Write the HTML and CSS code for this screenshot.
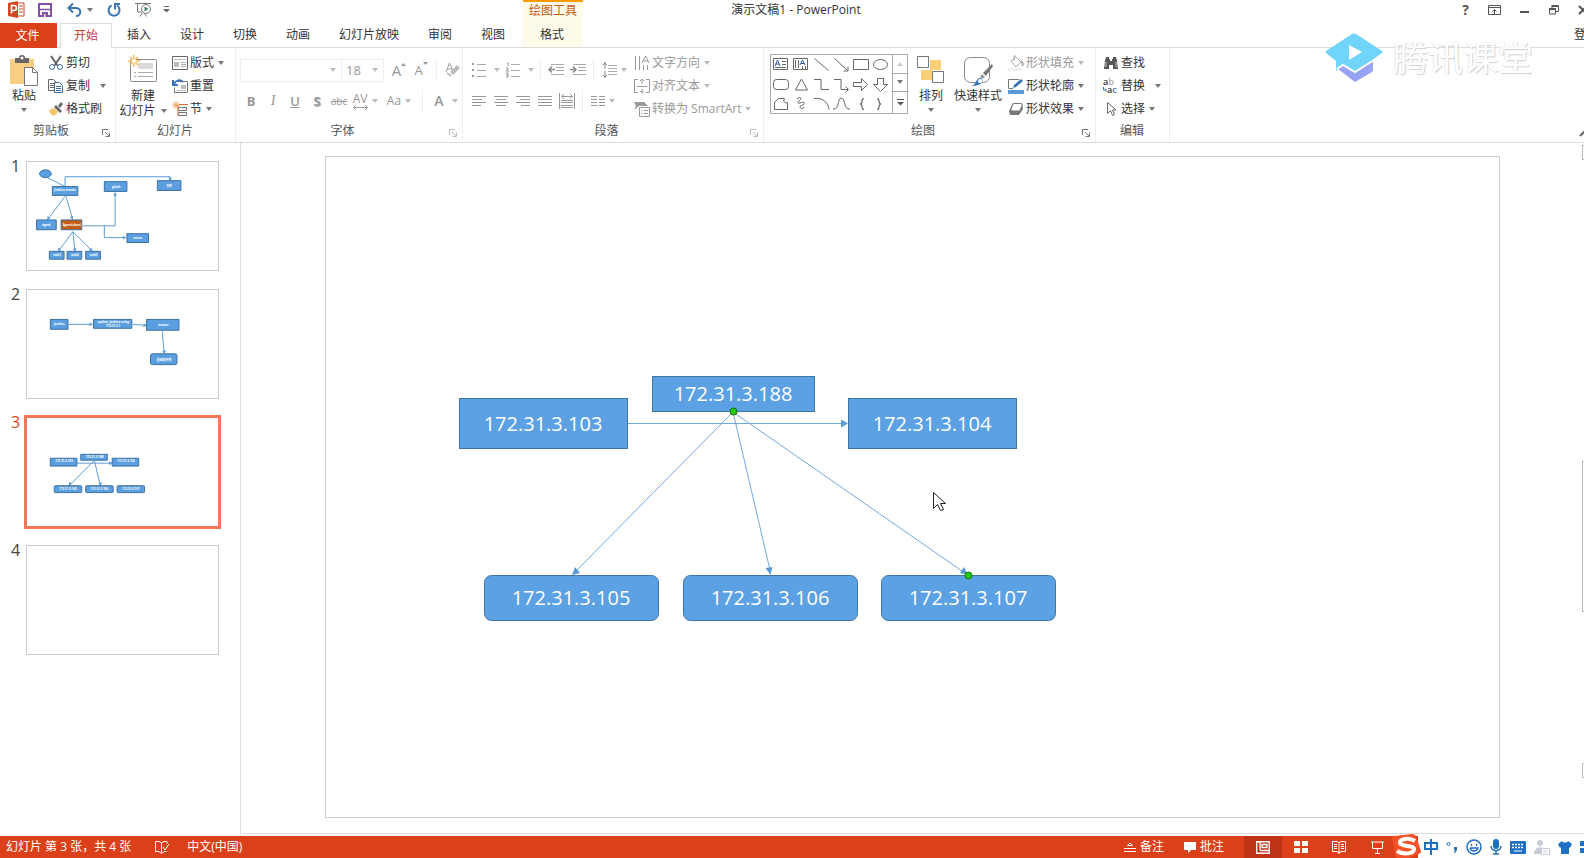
FILE: index.html
```html
<!DOCTYPE html>
<html lang="zh-CN">
<head>
<meta charset="utf-8">
<title>演示文稿1 - PowerPoint</title>
<link rel="stylesheet" href="styles.css">
</head>
<body>
<div class="app">
<header class="titlebar">
  <div class="quick">
    <svg class="q-logo" width="17" height="17" viewBox="0 0 17 17"><path d="M8 2h8v13H8z" fill="#fff" stroke="#d24726"/><path d="M11 5h4M11 8h4M11 11h4" stroke="#d24726"/><path d="M0 2l10-2v17L0 15z" fill="#d24726"/><path d="M3.500 12.500v-8h2.500a2 2 0 0 1 0 5H3.500" fill="none" stroke="#fff" stroke-width="1.600"/></svg>
    <button class="qb q-save" aria-label="保存"><svg width="14" height="14" viewBox="0 0 14 14"><path d="M1 1h12v12H1z" fill="#fff" stroke="#8450a8" stroke-width="2"/><path d="M2 6.500h10" stroke="#8450a8" stroke-width="1.500"/><path d="M4 9h6v5H4z" fill="#8450a8"/><path d="M6 11h1.500v3H6z" fill="#fff"/></svg></button>
    <button class="qb q-undo" aria-label="撤消"><svg width="15" height="14" viewBox="0 0 15 14"><path d="M1.500 5H9c6 0 5.500 8 0 8M6 .500L1.500 5 6 9.500" fill="none" stroke="#3b74b5" stroke-width="2"/></svg><i class="caret"></i></button>
    <button class="qb q-redo" aria-label="重复"><svg width="14" height="14" viewBox="0 0 14 14"><path d="M10 2.500A5.500 5.500 0 1 1 4.500 2.300M8 6.500V1h5" fill="none" stroke="#3b74b5" stroke-width="2"/></svg></button>
    <button class="qb q-show" aria-label="从头开始"><svg width="17" height="15" viewBox="0 0 17 15"><path d="M0 1.500h16M2.500 2v8H7M7.500 11L5 14.500M9 11l2.500 3.500" fill="none" stroke="#777"/><circle cx="11" cy="7" r="4.500" fill="#fff" stroke="#777"/><path d="M9.500 4.500v5l4-2.500z" fill="#44815f"/></svg></button>
    <button class="qb q-more" aria-label="自定义快速访问工具栏"><svg width="7" height="7" viewBox="0 0 7 7"><path d="M1 .500h5" stroke="#666"/><path d="M0 3h7L3.500 6.500z" fill="#666"/></svg></button>
  </div>
  <div class="context">绘图工具</div>
  <h1 class="doc-title">演示文稿1 - PowerPoint</h1>
  <div class="window-buttons">
    <button aria-label="帮助" class="help">?</button>
    <button aria-label="功能区显示选项"><svg width="13" height="10" viewBox="0 0 13 10"><path d="M.500.500h12v9H.500zM.500 2.500h12M6.500 9V4.500M4.500 6.500l2-2 2 2" fill="none" stroke="#555"/></svg></button>
    <button aria-label="最小化"><svg width="10" height="10" viewBox="0 0 10 10"><path d="M0 7h9" stroke="#555" stroke-width="2"/></svg></button>
    <button aria-label="还原"><svg width="10" height="10" viewBox="0 0 10 10"><path d="M.500 4h6v5h-6zM3 3.500V1h6.500v5.500H7" fill="none" stroke="#555"/><path d="M0 4h7M2.500 1h7" stroke="#555" stroke-width="2"/></svg></button>
    <button aria-label="关闭"><svg width="10" height="10" viewBox="0 0 10 10"><path d="M1 1l8 8M9 1L1 9" stroke="#555" stroke-width="2"/></svg></button>
  </div>
</header>

<nav class="tabs">
  <button class="tab file">文件</button>
  <button class="tab active">开始</button>
  <button class="tab">插入</button>
  <button class="tab">设计</button>
  <button class="tab">切换</button>
  <button class="tab">动画</button>
  <button class="tab">幻灯片放映</button>
  <button class="tab">审阅</button>
  <button class="tab">视图</button>
  <button class="tab format">格式</button>
  <button class="signin">登录</button>
</nav>

<section class="ribbon">
  <div class="group g-clip">
    <div class="body">
      <button class="big"><svg width="30" height="32" viewBox="0 0 30 32"><path d="M1 4h24v25H1z" fill="#f8cf80"/><path d="M6 3h4a3 3 0 0 1 6 0h4v5H6z" fill="#666"/><circle cx="13" cy="3" r="1.500" fill="#fff"/><path d="M15.500 12.500h8l5 5v13h-13z" fill="#fff" stroke="#777"/><path d="M23.500 12.500v5h5" fill="none" stroke="#777"/></svg><span>粘贴</span><i class="caret"></i></button>
      <div class="rows">
        <button class="sm"><svg width="16" height="16" viewBox="0 0 16 16"><path d="M3 1l7 10M13 1L6 11" stroke="#666" stroke-width="2"/><circle cx="4" cy="12" r="2.500" fill="#fff" stroke="#3b74b5"/><circle cx="12" cy="12" r="2.500" fill="#fff" stroke="#3b74b5"/></svg>剪切</button>
        <button class="sm"><svg width="16" height="16" viewBox="0 0 16 16"><path d="M.500 1.500h5l3 3v8h-8zM2 5.500h4M2 7.500h4M2 9.500h4" fill="#fff" stroke="#666"/><path d="M6.500 4.500h5l3 3v7h-8z" fill="#fff" stroke="#3b6a9b"/><path d="M8 8.500h5M8 10.500h5M8 12.500h5" stroke="#3b6a9b"/></svg>复制<i class="caret far"></i></button>
        <button class="sm"><svg width="16" height="16" viewBox="0 0 16 16"><path d="M1 9l5-2 4 4-4 4c-2-1-4-2-5-6z" fill="#f5c565"/><path d="M6 6l2-2 6 6-2 2zM10 5l3-4 2 2-3 4z" fill="#666"/></svg>格式刷</button>
      </div>
    </div>
    <div class="foot"><span>剪贴板</span><button class="launch" aria-label="剪贴板选项"><svg width="8" height="8" viewBox="0 0 8 8"><path d="M.500 6V.500H6M3 3l4 4M7.500 3.500v4h-4" fill="none" stroke="currentColor"/></svg></button></div>
  </div>

  <div class="group g-slides">
    <div class="body">
      <button class="big"><svg width="30" height="32" viewBox="0 0 30 32"><rect x="2.500" y="4.500" width="26" height="22" rx="1" fill="#fff" stroke="#888"/><path d="M10 8h15v6H10z" fill="#d9d9d9"/><path d="M6 17.500h2M10 17.500h15M6 21.500h2M10 21.500h15" stroke="#aaa"/><path d="M6 0v12M0 6h12M2 2l8 8M10 2l-8 8" stroke="#f4bd60" stroke-width="1.500"/><circle cx="6" cy="6" r="2" fill="#fff"/></svg><span>新建</span><span class="inline">幻灯片<i class="caret"></i></span></button>
      <div class="rows">
        <button class="sm"><svg width="16" height="16" viewBox="0 0 16 16"><path d="M.500 1.500h15v13H.500z" fill="#fff" stroke="#666"/><path d="M2 4h12v1H2zM2 7h5v5H2z" fill="#bbb"/><path d="M9 7.500h5M9 9.500h5M9 11.500h5" stroke="#aaa"/></svg>版式<i class="caret"></i></button>
        <button class="sm"><svg width="16" height="16" viewBox="0 0 16 16"><path d="M5.500 3.500h10v11h-13v-5" fill="#fff" stroke="#777"/><path d="M9 7h5v4H9zM5 12h9v1H5z" fill="#bbb"/><path d="M1 2v5h5M2 6c2-4 6-5 9-2" fill="none" stroke="#3b74b5" stroke-width="2"/></svg>重置</button>
        <button class="sm"><svg width="16" height="16" viewBox="0 0 16 16"><path d="M4 0v8M0 4h8M1 1l6 6M7 1L1 7" stroke="#f1a35b"/><path d="M7 3.500h9" stroke="#d86a3a"/><path d="M6.500 6.500h8v3h-8zM6.500 11.500h8v3h-8z" fill="#fff" stroke="#777"/><path d="M6 4v11" stroke="#d86a3a"/></svg>节<i class="caret"></i></button>
      </div>
    </div>
    <div class="foot"><span>幻灯片</span></div>
  </div>

  <div class="group g-font dim">
    <div class="body stack">
      <div class="line">
        <label class="combo name"><select aria-label="字体"><option></option></select><i class="caret"></i></label>
        <label class="combo size"><select aria-label="字号"><option>18</option></select><i class="caret"></i></label>
        <button class="ic w22" aria-label="增大字号"><span class="grow">A</span><svg width="5" height="10" viewBox="0 0 5 10"><path d="M0 3h5L2.500 0z" fill="#999"/></svg></button>
        <button class="ic w22" aria-label="减小字号"><span class="shrink">A</span><svg width="5" height="12" viewBox="0 0 5 12"><path d="M0 0h5L2.500 3z" fill="#999"/></svg></button>
        <b class="sep"></b>
        <button class="ic w22" aria-label="清除格式"><svg width="15" height="16" viewBox="0 0 15 16"><path d="M1 10L4.500 1 8 9M2 7h5" fill="none" stroke="#999"/><path d="M5 10l7-7 3 3-7 7z" fill="#bbb"/><path d="M2 11l4 3" stroke="#bbb" stroke-width="2"/></svg></button>
      </div>
      <div class="line">
        <button class="ic w22 bold">B</button>
        <button class="ic w22 ital">I</button>
        <button class="ic w22 under">U</button>
        <button class="ic w22 shadow">S</button>
        <button class="ic w22 strike">abc</button>
        <button class="ic w30" aria-label="字符间距"><span class="av">AV<svg width="15" height="5" viewBox="0 0 15 5"><path d="M1 2.500h13M3 0L.500 2.500 3 5M12 0l2.500 2.500L12 5" fill="none" stroke="#999"/></svg></span><i class="caret"></i></button>
        <button class="ic w38">Aa<i class="caret"></i></button>
        <b class="sep"></b>
        <button class="ic w38 color">A<i class="caret far"></i></button>
      </div>
    </div>
    <div class="foot"><span>字体</span><button class="launch" aria-label="字体选项"><svg width="8" height="8" viewBox="0 0 8 8"><path d="M.500 6V.500H6M3 3l4 4M7.500 3.500v4h-4" fill="none" stroke="currentColor"/></svg></button></div>
  </div>

  <div class="group g-para dim">
    <div class="body">
      <div class="stack para-icons">
        <div class="line">
          <button class="ic w34" aria-label="项目符号"><svg width="14" height="16" viewBox="0 0 14 16"><path d="M0 1h2v2H0zM0 7h2v2H0zM0 13h2v2H0z" fill="#999"/><path d="M5 2.500h9M5 8.500h9M5 14.500h9" stroke="#aaa"/></svg><i class="caret far"></i></button>
          <button class="ic w34" aria-label="编号"><svg width="14" height="16" viewBox="0 0 14 16"><path d="M1 1h1v3M0 6h2v1.500L0 9h3M0 11h2v4H0M0 13h2" fill="none" stroke="#999"/><path d="M5 2.500h9M5 8.500h9M5 14.500h9" stroke="#aaa"/></svg><i class="caret far"></i></button>
          <b class="sep"></b>
          <button class="ic w22" aria-label="降低列表级别"><svg width="16" height="12" viewBox="0 0 16 12"><path d="M3 .500h13M8 3.500h8M8 6.500h8M3 10.500h13" stroke="#aaa"/><path d="M1 5.500h6M4 2.500l-3 3 3 3" fill="none" stroke="#888" stroke-width="1.500"/></svg></button>
          <button class="ic w22" aria-label="提高列表级别"><svg width="16" height="12" viewBox="0 0 16 12"><path d="M3 .500h13M8 3.500h8M8 6.500h8M3 10.500h13" stroke="#aaa"/><path d="M0 5.500h6M3 2.500l3 3-3 3" fill="none" stroke="#888" stroke-width="1.500"/></svg></button>
          <b class="sep"></b>
          <button class="ic w34" aria-label="行距"><svg width="15" height="16" viewBox="0 0 15 16"><path d="M3 0v7M1 3l2-2 2 2M3 9v7M1 13l2 2 2-2" fill="none" stroke="#888"/><path d="M6 3.500h9M6 6.500h9M6 9.500h9M6 12.500h9" stroke="#aaa"/></svg><i class="caret"></i></button>
        </div>
        <div class="line">
          <button class="ic w22" aria-label="左对齐"><svg width="14" height="11" viewBox="0 0 14 11"><path d="M0 .500h14M0 3.500h10M0 6.500h14M0 9.500h9" stroke="#999"/></svg></button>
          <button class="ic w22" aria-label="居中"><svg width="14" height="11" viewBox="0 0 14 11"><path d="M0 .500h14M2 3.500h10M0 6.500h14M2 9.500h10" stroke="#999"/></svg></button>
          <button class="ic w22" aria-label="右对齐"><svg width="14" height="11" viewBox="0 0 14 11"><path d="M0 .500h14M4 3.500h10M0 6.500h14M5 9.500h9" stroke="#999"/></svg></button>
          <button class="ic w22" aria-label="两端对齐"><svg width="14" height="11" viewBox="0 0 14 11"><path d="M0 .500h14M0 3.500h14M0 6.500h14M0 9.500h14" stroke="#999"/></svg></button>
          <button class="ic w22" aria-label="分散对齐"><svg width="16" height="16" viewBox="0 0 16 16"><path d="M.500 0v16M15.500 0v16M3 3.500h10M5 1L2.500 3.500 5 6M11 1l2.500 2.500L11 6M2 7.500h12M2 9.500h12M2 12.500h12M2 14.500h12" fill="none" stroke="#999"/></svg></button>
          <b class="sep"></b>
          <button class="ic w34" aria-label="分栏"><svg width="14" height="11" viewBox="0 0 14 11"><path d="M0 .500h6M0 3.500h6M0 6.500h6M0 9.500h6M8 .500h6M8 3.500h6M8 6.500h6M8 9.500h6" stroke="#999"/></svg><i class="caret"></i></button>
        </div>
      </div>
      <div class="rows">
        <button class="sm"><svg width="16" height="16" viewBox="0 0 16 16"><path d="M1.500 1v14M5.500 1v14M9.500 10v5M13.500 10v5M8 8l3.500-7L15 8M9 6h5" fill="none" stroke="#999"/></svg>文字方向<i class="caret"></i></button>
        <button class="sm"><svg width="16" height="16" viewBox="0 0 16 16"><path d="M4 1.500H.500v13H4M12 1.500h3.500v13H12M3 8.500h10M8 1v5M6 3l2-2 2 2M8 11v4M6 13l2 2 2-2" fill="none" stroke="#999"/></svg>对齐文本<i class="caret"></i></button>
        <button class="sm"><svg width="16" height="16" viewBox="0 0 16 16"><path d="M0 1h10l4 4H5L0 9l2-4z" fill="#999"/><path d="M5.500 6.500h10v9h-10z" fill="#fff" stroke="#999"/><path d="M7 9.500h1M10 9.500h4M7 12.500h1M10 12.500h4" stroke="#999"/></svg>转换为 SmartArt<i class="caret"></i></button>
      </div>
    </div>
    <div class="foot"><span>段落</span><button class="launch" aria-label="段落选项"><svg width="8" height="8" viewBox="0 0 8 8"><path d="M.500 6V.500H6M3 3l4 4M7.500 3.500v4h-4" fill="none" stroke="currentColor"/></svg></button></div>
  </div>

  <div class="group g-draw">
    <div class="body">
      <div class="gallery">
        <svg width="121" height="58" viewBox="0 0 121 58" fill="none" stroke="#666">
          <path d="M2.500 3.500h14v11h-14zM11 6.500h4M11 9.500h4M4 12.500h11"/><path d="M4 11l2.500-6L9 11M5 9h3" stroke="#35589c"/>
          <path d="M22.500 3.500h14v11h-14zM24.500 5v8M27.500 5v8M31.500 11v3M34.500 11v3"/><path d="M29 10l2.500-5 2.500 5M30 8.500h3" stroke="#35589c"/>
          <path d="M43.500 3.500l14 12M63.500 3.500l13 12M77 11.500v4.500h-4.500"/>
          <path d="M82.500 4.500h15v10h-15z"/><ellipse cx="109.500" cy="9.500" rx="7" ry="5"/>
          <rect x="2.500" y="24.500" width="15" height="10" rx="3"/><path d="M30.500 24l6 11h-12z"/>
          <path d="M43 24.500h7v10h8M63 24.500h7v10h7M74.500 31.500l3 3-3 3M82.500 27.500h8v-4l6 6-6 6v-4h-8zM106.500 23.500h6v6h4l-7 7-7-7h4z"/>
          <path d="M3.500 54.500v-7l4-4h6c-2 4 1 5 3 4v7zM26 44c3-3 5-1 3 1s-3 4 0 3 5-1 4 1-4 1-4 3 4 2 4 0M43 43.500c8-1 14 3 15 11M62 54c7 1 4-11 8-11 5 0 2 12 9 11"/>
          <path d="M93 43.500c-4 0 0 5-4 5.500 4 .500 0 5.500 4 5.500M106 43.500c4 0 0 5 4 5.500-4 .500 0 5.500-4 5.500" stroke-width="1.200"/>
        </svg>
        <div class="scroll">
          <button aria-label="上一行"><i class="caret up"></i></button>
          <button aria-label="下一行"><i class="caret"></i></button>
          <button aria-label="更多形状"><svg width="7" height="7" viewBox="0 0 7 7"><path d="M0 .500h7" stroke="#555"/><path d="M0 3h7L3.500 6.500z" fill="#555"/></svg></button>
        </div>
      </div>
      <button class="big arrange"><svg width="28" height="32" viewBox="0 0 28 32"><path d="M13 5h11v10H13zM4 15h11v10H4z" fill="#fbcf78"/><path d="M.500 1.500h11v11h-11zM15.500 16.500h11v11h-11z" fill="#fff" stroke="#777"/></svg><span>排列</span><i class="caret"></i></button>
      <button class="big"><svg width="30" height="32" viewBox="0 0 30 32"><rect x="1.500" y="2.500" width="25" height="25" rx="6" fill="#fff" stroke="#888"/><path d="M29 9l-9 9 3 3 7-10z" fill="#777"/><path d="M19 19l3 3-3 2-2-2z" fill="#999"/><path d="M8 31c6-1 4-7 9-8 4 1 4 8-9 8z" fill="#3b74b5"/><circle cx="17" cy="26" r="2" fill="#fff"/></svg><span>快速样式</span><i class="caret"></i></button>
      <div class="rows">
        <button class="sm off"><svg width="16" height="16" viewBox="0 0 16 16"><path d="M3 6l5-4 5 5-5 5zM6 6V1h2" fill="none" stroke="#aaa"/><path d="M13 6c2 2 2 4 1 5" fill="none" stroke="#aaa" stroke-width="2"/><path d="M0 13h14v3H0z" fill="#f3eeee"/></svg>形状填充<i class="caret"></i></button>
        <button class="sm"><svg width="16" height="16" viewBox="0 0 16 16"><path d="M11 1.500H.500v9H5" fill="none" stroke="#777"/><path d="M5 10l1-3 7-6 2 2-7 6z" fill="#3b74b5"/><path d="M0 12h16v4H0z" fill="#5a9bd5"/></svg>形状轮廓<i class="caret"></i></button>
        <button class="sm"><svg width="16" height="16" viewBox="0 0 16 16"><path d="M5 2h9l1 6-4 6H2l-1-4z" fill="#777"/><path d="M6.500 2.500h6c1 0 2 1 1.500 2l-1.500 4c-.500 1-1 1.500-2 1.500h-6c-1 0-2-1-1.500-2l1.500-4c.500-1 1-1.500 2-1.500z" fill="#fff" stroke="#777"/></svg>形状效果<i class="caret"></i></button>
      </div>
    </div>
    <div class="foot"><span>绘图</span><button class="launch" aria-label="绘图选项"><svg width="8" height="8" viewBox="0 0 8 8"><path d="M.500 6V.500H6M3 3l4 4M7.500 3.500v4h-4" fill="none" stroke="currentColor"/></svg></button></div>
  </div>

  <div class="group g-edit">
    <div class="body">
      <div class="rows">
        <button class="sm"><svg width="16" height="16" viewBox="0 0 16 16"><path d="M3 2h3v2h1v2h2V4h1V2h3l1 4 1 8h-5v-4H6v4H1l1-8z" fill="#555"/><path d="M3 7v5M13 7v5" stroke="#ccc"/></svg>查找</button>
        <button class="sm"><span class="rep"><b>a<em>b</em></b><b class="to"><svg width="4" height="5" viewBox="0 0 4 5"><path d="M.500 0v3H3M2 1.500L3.500 3 2 4.500" fill="none" stroke="#3b74b5"/></svg>a<s>c</s></b></span>替换<i class="caret far"></i></button>
        <button class="sm"><svg width="16" height="16" viewBox="0 0 16 16"><path d="M4.500 1.500v11l3-3 2 5 2-1-2-4.500h3.500z" fill="#fff" stroke="#666"/></svg>选择<i class="caret"></i></button>
      </div>
    </div>
    <div class="foot"><span>编辑</span></div>
  </div>
  <button class="collapse" aria-label="折叠功能区"><svg width="10" height="8" viewBox="0 0 10 8"><path d="M1 6l4-4 4 4" fill="none" stroke="#666" stroke-width="2"/></svg></button>
</section>

<main class="work">
  <ol class="thumbs">
    <li class="thumb"><span>1</span>
      <svg viewBox="0 0 193 110">
        <g class="wire"><path d="M20 16l18 9M38 25v-10h107v4M38 35L20 59M39 35l7 24M56 65h33V31M78 65v12h22M46 71L31 91M46 71l2 20M46 71l20 20"/></g>
        <path class="tip" d="M143 16h4l-2 3zM87 34h4l-2-3zM97 75v4l3-2zM20 59v-4l3 2zM46 59l-3-3 3-1zM31 91v-4l3 2zM48 91l-2-3h4zM66 91l-4-1 3-3z"/>
        <ellipse class="box" cx="18" cy="12" rx="6" ry="4"/>
        <g class="box"><path d="M25 25h26v9H25zM78 20h23v10H78zM132 19h24v10h-24zM9 59h20v10H9zM101 73h22v9h-22zM22 91h15v8H22zM40 91h15v8H40zM59 91h15v8H59z"/></g>
        <path class="box hot" d="M34 59h21v10H34z"/>
        <g class="tiny"><text x="38" y="30">Jenkins master</text><text x="90" y="26">gitlab</text><text x="144" y="25">仓库</text><text x="19" y="65">agent</text><text x="45" y="65">Agent(slave)</text><text x="112" y="78">nexus</text><text x="30" y="96">web1</text><text x="48" y="96">web2</text><text x="67" y="96">web3</text></g>
      </svg></li>
    <li class="thumb"><span>2</span>
      <svg viewBox="0 0 193 110">
        <g class="wire"><path d="M42 35h24M107 35l14 1M137 42l2 23"/></g>
        <path class="tip" d="M63 33v4l3-2zM118 34v4l3-2zM137 62h4l-2 3z"/>
        <g class="box"><path d="M23 30h18v10H23zM67 30h39v9H67zM121 30h33v11h-33z"/><rect x="125" y="65" width="27" height="11" rx="2"/></g>
        <g class="tiny"><text x="32" y="36">jenkins</text><text x="87" y="34">update, Jenkins using</text><text x="87" y="38">172.31.3.1</text><text x="138" y="37">master</text><text x="139" y="72">基础软件库</text></g>
      </svg></li>
    <li class="thumb selected"><span>3</span>
      <svg viewBox="0 0 193 110">
        <g class="wire"><path d="M50 46h36M67 44L42 69M68 44l6 25"/></g>
        <path class="tip" d="M83 44v4l3-2zM42 69v-4l3 2zM74 69l-2-3h4z"/>
        <g class="box"><path d="M23 41h27v8H23zM54 37h27v6H54zM86 41h27v8H86z"/><rect x="27" y="69" width="28" height="7" rx="1"/><rect x="59" y="69" width="28" height="7" rx="1"/><rect x="91" y="69" width="28" height="7" rx="1"/></g>
        <g class="tiny"><text x="37" y="45">172.31.3.103</text><text x="68" y="41">172.31.3.188</text><text x="100" y="45">172.31.3.104</text><text x="41" y="73">172.31.3.105</text><text x="73" y="73">172.31.3.106</text><text x="105" y="73">172.31.3.107</text></g>
      </svg></li>
    <li class="thumb"><span>4</span><svg viewBox="0 0 193 110"></svg></li>
  </ol>

  <div class="stage">
    <svg class="slide" viewBox="0 0 1175 662">
      <g class="node">
        <rect x="134.500" y="242.500" width="168" height="50"/><rect x="327.500" y="220.500" width="162" height="35"/><rect x="523.500" y="242.500" width="168" height="50"/>
        <rect x="159.500" y="419.500" width="174" height="45" rx="7"/><rect x="358.500" y="419.500" width="174" height="45" rx="7"/><rect x="556.500" y="419.500" width="174" height="45" rx="7"/>
      </g>
      <g class="link"><path d="M303 267.500h214M408 256L252 414M408 256l37 158M408 256l229 159"/></g>
      <path class="tip" d="M523 267.500l-7-4v8zM247 419l3-8 5 6zM445.500 419l-5-7 7-1zM643 419l-8-2 4-6z"/>
      <circle class="handle" cx="408.500" cy="255.500" r="3.500"/><circle class="handle" cx="643.500" cy="419.500" r="3.500"/>
      <g class="ip"><text x="218" y="275">172.31.3.103</text><text x="408" y="245">172.31.3.188</text><text x="607" y="275">172.31.3.104</text><text x="246" y="449">172.31.3.105</text><text x="445" y="449">172.31.3.106</text><text x="643" y="449">172.31.3.107</text></g>
      <path d="M608.500 336.500v16l4-4 3 6 3-1-3-6h5z" fill="#fff" stroke="#222"/>
    </svg>
  </div>
  <div class="scrollbar"><i></i><i class="grip"></i><i></i></div>
</main>

<footer class="status">
  <span class="count">幻灯片 第 3 张，共 4 张</span>
  <button aria-label="拼写检查" class="spell"><svg width="15" height="13" viewBox="0 0 15 13"><path d="M6.500 11.500V2L4 .500H.500v10H4l2.500 2 3-2h2M6.500 2L9 .500h3v2M8 6l2 3 4-6" fill="none" stroke="#fff"/></svg></button>
  <button>中文(中国)</button>
  <div class="status-right">
    <button class="note"><svg width="12" height="12" viewBox="0 0 12 12"><path d="M3.500 4.500h5L6 2zM0 7.500h12M0 10.500h12" fill="none" stroke="#fff"/></svg>备注</button>
    <button class="note"><svg width="12" height="12" viewBox="0 0 12 12"><path d="M0 1h12v8H7l-3 3V9H0z" fill="#fff"/></svg>批注</button>
    <button class="view on" aria-label="普通视图"><svg width="14" height="13" viewBox="0 0 14 13"><path d="M.750.750h12.500v11.500H.750zM4 1v8M4 9.500h9M6 3.500h5v3H6z" fill="none" stroke="#fff" stroke-width="1.300"/></svg></button>
    <button class="view" aria-label="幻灯片浏览"><svg width="14" height="12" viewBox="0 0 14 12"><path d="M0 0h6v5H0zM8 0h6v5H8zM0 7h6v5H0zM8 7h6v5H8z" fill="#fff"/></svg></button>
    <button class="view" aria-label="阅读视图"><svg width="14" height="13" viewBox="0 0 14 13"><path d="M.500.500H5L7 2 9 .500h4.500v10H9L7 12l-2-1.500H.500zM7 2v11M2 3.500h3M2 5.500h3M2 7.500h3M9 3.500h3M9 5.500h3M9 7.500h3" fill="none" stroke="#fff"/></svg></button>
    <button class="view" aria-label="幻灯片放映"><svg width="13" height="13" viewBox="0 0 13 13"><path d="M0 1h13M1.500 1v6.500h10V1M6.500 8v4M4 12.500h5" fill="none" stroke="#fff"/></svg></button>
  </div>
  <div class="ime">
    <svg class="sogou" width="30" height="26" viewBox="0 0 30 26"><path d="M0 4Q0 2 2 2L20 0Q23 0 24 2L29 17Q29 19 27 20L9 26H6Q4 26 4 24z" fill="#f4532a"/><path d="M23 7c-6-4-16-2-15 2 1 4 14 2 14 6 0 5-11 6-17 2" fill="none" stroke="#fff" stroke-width="4"/></svg>
    <svg width="14" height="16" viewBox="0 0 14 16"><path d="M1 4h12v6H1zM7 0v16" fill="none" stroke="#1f6fc4" stroke-width="2"/></svg>
    <svg width="12" height="12" viewBox="0 0 12 12"><circle cx="2.500" cy="3" r="1.500" fill="none" stroke="#1f6fc4"/><path d="M8 6h3v3l-2 3H8l1-3H8z" fill="#1f6fc4"/></svg>
    <svg width="16" height="16" viewBox="0 0 16 16"><circle cx="8" cy="8" r="7" fill="none" stroke="#1f6fc4" stroke-width="1.500"/><path d="M5.500 5v2M10.500 5v2M4 9h8c-1 4-7 4-8 0" fill="none" stroke="#1f6fc4" stroke-width="1.300"/></svg>
    <svg width="12" height="16" viewBox="0 0 12 16"><rect x="3" y="0" width="6" height="10" rx="3" fill="#1f6fc4"/><path d="M1 7c0 6 10 6 10 0M6 12v3M3 15h6" fill="none" stroke="#1f6fc4" stroke-width="1.500"/></svg>
    <svg width="16" height="13" viewBox="0 0 16 13"><rect width="16" height="13" rx="1" fill="#1f6fc4"/><path d="M2 3.500h12M2 6.500h12" stroke="#fff" stroke-width="1.500" stroke-dasharray="2 1"/><path d="M4 10h8" stroke="#fff"/></svg>
    <svg width="16" height="16" viewBox="0 0 16 16"><circle cx="6" cy="4" r="3" fill="#c8cdd8"/><path d="M1 12c0-5 10-5 10 0zM0 12h7v3H0z" fill="#c8cdd8"/><path d="M7.500 9.500h8v6h-8zM10 11v3M12 11v3" fill="#fff" stroke="#c8cdd8"/></svg>
    <svg width="14" height="14" viewBox="0 0 14 14"><path d="M4 1c1 2 5 2 6 0l4 3-2 4-1-1v7H3V7L2 8 0 4z" fill="#1f6fc4"/></svg>
    <svg width="12" height="12" viewBox="0 0 12 12"><path d="M0 0h5v5H0zM7 0h5v5H7zM0 7h5v5H0zM7 7h5v5H7z" fill="#1f6fc4"/></svg>
  </div>
</footer>

<div class="watermark"><svg width="58" height="50" viewBox="0 0 58 50"><path d="M13 36l17 13 17-10q1-1 1-3V26H13z" fill="#8c9bf6"/><path d="M27 1q2-1 4 0l26 17q1 1 0 2L30 39l-13-7-6 6v-10L1 20q-1-1 0-2z" fill="#62d1fb"/><path d="M12 36l6-4 12 7 19-12" fill="none" stroke="#fff" stroke-width="2"/><path d="M24 12v15l13-8z" fill="#fff"/></svg><span>腾讯课堂</span></div>
</div>
</body>
</html>
```

FILE: styles.css
```css
* { box-sizing: border-box; }
body {
  margin: 0;
  overflow: hidden;
  background: #fff;
  color: #333;
  font: 12px/16px "Open Sans", "Noto Sans CJK SC", sans-serif;
}
svg { flex: none; display: block; }
button, select {
  margin: 0;
  padding: 0;
  border: 0;
  background: none;
  color: inherit;
  font: inherit;
  white-space: nowrap;
  appearance: none;
}
.app {
  position: relative;
  display: flex;
  flex-direction: column;
  height: 100vh;
  overflow: hidden;
}
.caret {
  flex: none;
  border: 3px solid transparent;
  border-top: 4px solid #777;
  border-bottom: 0;
}
.caret.up { border-top: 0; border-bottom: 4px solid #ccc; }

/* title bar */
.titlebar { display: grid; grid-template-columns: 523px 60px 426px 1fr; height: 23px; }
.quick { display: flex; align-items: center; height: 19px; padding-left: 8px; }
.qb { display: flex; align-items: center; gap: 5px; }
.q-save { margin-left: 13px; }
.q-undo { margin-left: 15px; }
.q-redo { margin-left: 14px; }
.q-show { margin-left: 14px; }
.q-more { margin-left: 11px; }
.context {
  padding-top: 1px;
  border-top: 2px solid #ff9a00;
  background: #fffbea;
  color: #c55a11;
  text-align: center;
}
.doc-title { margin: 0; padding-top: 2px; font-size: 12px; font-weight: 400; text-align: center; }
.window-buttons { display: flex; justify-content: flex-end; align-items: center; gap: 19px; height: 19px; margin-right: -4px; }
.help { font-size: 14px; font-weight: 700; color: #555; }

/* tabs */
.tabs { display: flex; gap: 1px; height: 25px; border-bottom: 1px solid #dcdcdc; }
.tab { height: 24px; padding: 0 14px; }
.file { width: 57px; height: 25px; margin-right: 2px; padding: 0 16px 0 14px; background: #dc401b; color: #fff; }
.active { height: 25px; border: 1px solid #dcdcdc; border-bottom: 0; background: #fff; color: #c43e1c; padding: 0 13px; }
.format { width: 60px; margin-left: 3px; padding: 0 16px 0 14px; background: #fffbea; }
.signin { width: 10px; margin-left: auto; overflow: hidden; text-align: left; }

/* ribbon */
.ribbon { display: flex; height: 95px; border-bottom: 1px solid #dcdcdc; }
.group { display: flex; flex-direction: column; flex: none; padding-top: 3px; border-right: 1px solid #eee; }
.g-clip { width: 116px; }
.g-slides { width: 120px; }
.g-font { width: 227px; }
.g-para { width: 301px; }
.g-draw { width: 332px; }
.g-edit { width: 74px; }
.body { display: flex; flex: none; height: 69px; }
.foot { display: flex; align-items: center; height: 22px; padding-right: 1px; color: #555; }
.foot span { flex: 1; text-align: center; }
.launch { width: 12px; padding-top: 4px; color: #777; }
.dim .launch { color: #bbb; }
.big { display: flex; flex-direction: column; align-items: center; padding-top: 4px; line-height: 15px; }
.big svg { margin-bottom: 1px; }
.big > .caret { margin-top: 5px; }
.inline { display: flex; align-items: center; gap: 5px; }
.g-clip .big { width: 40px; margin-left: 4px; }
.g-slides .big { width: 50px; margin-left: 2px; }
.rows { display: flex; flex-direction: column; }
.sm { display: flex; align-items: center; gap: 2px; height: 23px; }
.sm .caret { margin-left: 2px; }
.sm .caret.far { margin-left: 8px; }
.g-clip .rows { margin-left: 4px; }
.g-slides .rows { margin-left: 4px; }
.g-para .rows { margin-left: 1px; }
.dim .body, .off { color: #999; }
.dim .caret, .off .caret { border-top-color: #bbb; }

.stack { display: flex; flex-direction: column; gap: 9px; padding-top: 8px; }
.line { display: flex; align-items: center; height: 22px; }
.g-font .line { padding-left: 4px; }
.combo { display: flex; align-items: center; flex: none; height: 23px; padding: 0 5px 0 4px; border: 1px solid #eee; }
.combo select { flex: 1; min-width: 0; font-size: 13px; }
.combo.name { width: 102px; }
.combo.size { width: 43px; margin-left: -1px; margin-right: 4px; }
.ic { display: flex; align-items: center; justify-content: center; flex: none; height: 22px; gap: 4px; }
.w22 { width: 22px; }
.w30 { width: 30px; }
.w34 { width: 34px; }
.w38 { width: 38px; }
.ic .far { margin-left: 4px; }
.grow { font-size: 15px; }
.shrink { font-size: 13px; }
.grow + svg, .shrink + svg { margin-left: -4px; margin-bottom: 4px; }
.sep { flex: none; width: 1px; height: 22px; margin: 0 4px; background: #eee; }
.bold { font-size: 13px; font-weight: 700; }
.ital { font: italic 14px "Liberation Serif", serif; }
.under { font-size: 13px; font-weight: 600; text-decoration: underline; }
.shadow { font-size: 13px; font-weight: 700; text-shadow: 1px 1px 1px #bbb; }
.strike { font-size: 10px; text-decoration: line-through; }
.av { display: flex; flex-direction: column; align-items: center; line-height: 13px; }
.color { font-size: 14px; font-weight: 600; }
.para-icons { width: 170px; padding-left: 5px; }
.para-icons .w34 { justify-content: flex-start; padding-left: 4px; }

.gallery { display: flex; width: 138px; height: 60px; margin: 3px 0 0 6px; border: 1px solid #aaa; }
.scroll { flex: 1; display: grid; border-left: 1px solid #aaa; }
.scroll button { display: flex; align-items: center; justify-content: center; border-top: 1px solid #aaa; }
.scroll button:first-child { border-top: 0; }
.arrange { width: 36px; margin-left: 5px; }
.arrange + .big { width: 52px; margin-left: 3px; }
.g-draw .rows { margin-left: 4px; }
.g-edit .rows { margin-left: 7px; }
.rep { width: 16px; font-size: 9px; line-height: 8px; }
.rep b { display: flex; align-items: center; font-weight: 600; }
.rep em { color: #aaa; font-style: normal; }
.rep s { color: #3b74b5; text-decoration: none; }
.collapse { align-self: flex-end; margin: 0 -5px 4px auto; }

/* workspace */
.work { position: relative; display: flex; flex: 1; min-height: 0; }
.thumbs {
  display: flex;
  flex-direction: column;
  gap: 18px;
  width: 241px;
  margin: 0;
  padding: 18px 0 0 11px;
  border-right: 1px solid #dcdcdc;
  list-style: none;
}
.thumb { display: flex; gap: 5px; height: 110px; font-size: 16px; line-height: 10px; color: #444; }
.thumb span { width: 10px; }
.thumb svg { width: 193px; height: 110px; border: 1px solid #ccc; }
.selected { color: #d24726; }
.selected svg { border-color: #f2775a; outline: 2px solid #f2775a; }
.wire path { fill: none; stroke: #5b9bd5; }
.link path { fill: none; stroke: #76a8dc; }
.tip { fill: #5b9bd5; }
.box { fill: #5b9fe0; stroke: #3a6f9f; }
.hot { fill: #c55a11; }
.tiny { fill: #fff; font-size: 3px; font-weight: 700; text-anchor: middle; }
.stage { flex: 1; min-width: 0; margin-left: 2px; padding: 13px 84px 0 82px; border-bottom: 1px solid #dcdcdc; }
.slide { width: 100%; outline: 1px solid #ccc; outline-offset: -1px; }
.node rect { fill: #5ba1e3; stroke: #3f76a6; }
.handle { fill: #27c80e; stroke: #14760c; }
.ip { fill: #fff; font-size: 20px; text-anchor: middle; }
.scrollbar {
  position: absolute;
  top: 2px;
  right: 0;
  bottom: 56px;
  display: flex;
  flex-direction: column;
  justify-content: space-between;
  width: 2px;
}
.scrollbar i { height: 15px; border: 1px solid #bbb; border-right: 0; }
.scrollbar .grip { height: 151px; margin-top: 150px; }

/* status bar */
.status { display: flex; align-items: center; height: 22px; margin-top: 2px; padding-left: 6px; background: #dc401b; color: #fff; }
.spell { margin: 0 17px 0 24px; }
.status-right { display: flex; margin-left: auto; height: 22px; }
.note { display: flex; align-items: center; gap: 4px; margin-right: 20px; }
.view { display: flex; align-items: center; justify-content: center; width: 38px; }
.on { background: #bd3314; }
.ime { display: flex; align-items: center; gap: 8px; height: 24px; margin: 0 -8px 0 -4px; background: linear-gradient(90deg, transparent 26px, #fff 26px); }
.sogou { margin-right: -6px; }

.watermark { position: absolute; top: 33px; right: 51px; display: flex; gap: 10px; opacity: .9; }
.watermark span { color: #fff; font-size: 35px; line-height: 50px; text-shadow: 1px 1px 1px #ccc, -1px 0 1px #e8e8e8; }
```
